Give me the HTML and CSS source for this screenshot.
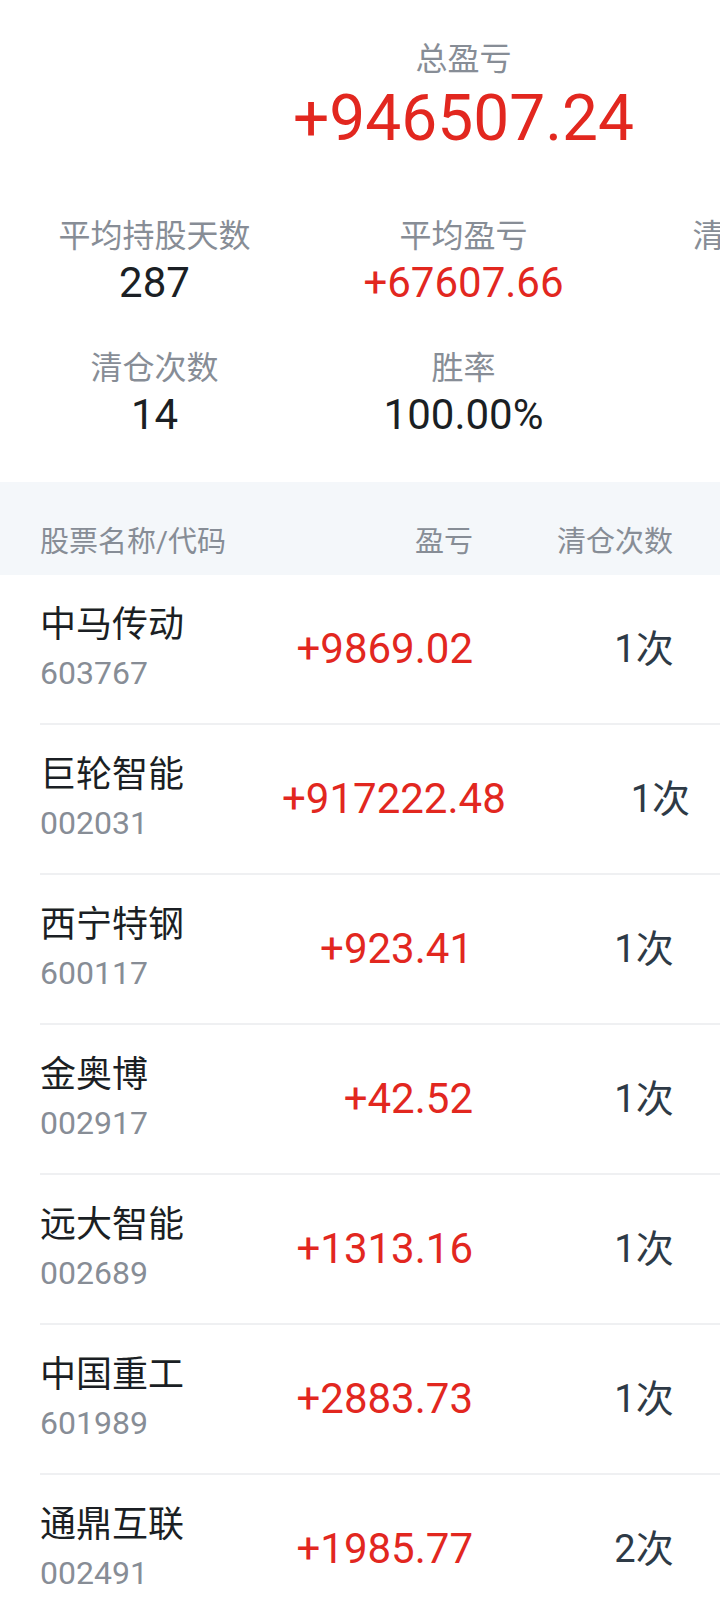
FILE: index.html
```html
<!DOCTYPE html>
<html lang="zh-CN">
<head>
<meta charset="UTF-8">
<meta name="viewport" content="width=device-width, initial-scale=1.0">
<title>清仓股票</title>
<link rel="stylesheet" href="styles.css">
</head>
<body>
<div class="page">
    <div class="summary">
        <div class="summary-label">总盈亏</div>
        <div class="summary-value up">+946507.24</div>
    </div>

    <div class="stats">
        <div class="stat">
            <div class="stat-label">平均持股天数</div>
            <div class="stat-value">287</div>
        </div>
        <div class="stat">
            <div class="stat-label">平均盈亏</div>
            <div class="stat-value up">+67607.66</div>
        </div>
        <div class="stat">
            <div class="stat-label">清仓股票数</div>
            <div class="stat-value">7</div>
        </div>
        <div class="stat">
            <div class="stat-label">清仓次数</div>
            <div class="stat-value">14</div>
        </div>
        <div class="stat">
            <div class="stat-label">胜率</div>
            <div class="stat-value">100.00%</div>
        </div>
    </div>

    <div class="table-head">
        <div class="col-name">股票名称/代码</div>
        <div class="col-profit">盈亏</div>
        <div class="col-times">清仓次数</div>
    </div>

    <ul class="stock-list">
        <li class="stock-row">
            <div class="col-name">
                <div class="stock-name">中马传动</div>
                <div class="stock-code">603767</div>
            </div>
            <div class="col-profit up">+9869.02</div>
            <div class="col-times">1次</div>
        </li>
        <li class="stock-row">
            <div class="col-name">
                <div class="stock-name">巨轮智能</div>
                <div class="stock-code">002031</div>
            </div>
            <div class="col-profit up">+917222.48</div>
            <div class="col-times">1次</div>
        </li>
        <li class="stock-row">
            <div class="col-name">
                <div class="stock-name">西宁特钢</div>
                <div class="stock-code">600117</div>
            </div>
            <div class="col-profit up">+923.41</div>
            <div class="col-times">1次</div>
        </li>
        <li class="stock-row">
            <div class="col-name">
                <div class="stock-name">金奥博</div>
                <div class="stock-code">002917</div>
            </div>
            <div class="col-profit up">+42.52</div>
            <div class="col-times">1次</div>
        </li>
        <li class="stock-row">
            <div class="col-name">
                <div class="stock-name">远大智能</div>
                <div class="stock-code">002689</div>
            </div>
            <div class="col-profit up">+1313.16</div>
            <div class="col-times">1次</div>
        </li>
        <li class="stock-row">
            <div class="col-name">
                <div class="stock-name">中国重工</div>
                <div class="stock-code">601989</div>
            </div>
            <div class="col-profit up">+2883.73</div>
            <div class="col-times">1次</div>
        </li>
        <li class="stock-row">
            <div class="col-name">
                <div class="stock-name">通鼎互联</div>
                <div class="stock-code">002491</div>
            </div>
            <div class="col-profit up">+1985.77</div>
            <div class="col-times">2次</div>
        </li>
    </ul>
</div>
</body>
</html>
```

FILE: styles.css
```css
html, body {
    margin: 0;
    padding: 0;
    background-color: #fff;
    overflow: hidden;
}
body {
    font-family: Roboto, "Noto Sans CJK SC", sans-serif;
    color: #1b1f24;
}
.page {
    width: 927px;
}
.up {
    color: #e2271f;
}

/* top summary */
.summary {
    width: 309px;
    margin-left: 309px;
    padding-top: 39px;
    text-align: center;
}
.summary-label {
    font-size: 32px;
    line-height: 40px;
    color: #878d96;
}
.summary-value {
    font-size: 64px;
    line-height: 80px;
    white-space: nowrap;
    margin: 0 -100px;
}

.stats {
    display: grid;
    grid-template-columns: repeat(3, 309px);
    row-gap: 38px;
    margin-top: 55px;
}
.stat {
    text-align: center;
}
.stat-label {
    font-size: 32px;
    line-height: 44px;
    color: #878d96;
}
.stat-value {
    font-size: 42px;
    line-height: 50px;
}

/* table */
.table-head {
    display: flex;
    margin-top: 42px;
    padding: 40px 0 13px 40px;
    background-color: #f4f7fa;
    font-size: 29px;
    line-height: 40px;
    color: #878d96;
}
.table-head .col-name {
    width: 242px;
}
.table-head .col-profit {
    width: 191px;
    text-align: right;
}
.table-head .col-times {
    margin-left: 84px;
}

.stock-list {
    list-style: none;
    margin: 0;
    padding: 0;
}
.stock-row {
    display: flex;
    align-items: center;
    width: 775px;
    margin-left: 40px;
    padding: 26px 0;
    border-bottom: 2px solid #eff0f2;
}
.stock-row .col-name {
    width: 242px;
    flex: none;
}
.stock-name {
    font-size: 36px;
    line-height: 48px;
    color: #1b1f24;
}
.stock-code {
    font-size: 32px;
    line-height: 48px;
    color: #878d96;
}
.stock-row .col-profit {
    flex: none;
    min-width: 191px;
    text-align: right;
    white-space: nowrap;
    font-size: 42px;
    line-height: 50px;
}
.stock-row .col-times {
    flex: 1;
    text-align: center;
    font-size: 38px;
    line-height: 50px;
    color: #2e3a46;
}
```
